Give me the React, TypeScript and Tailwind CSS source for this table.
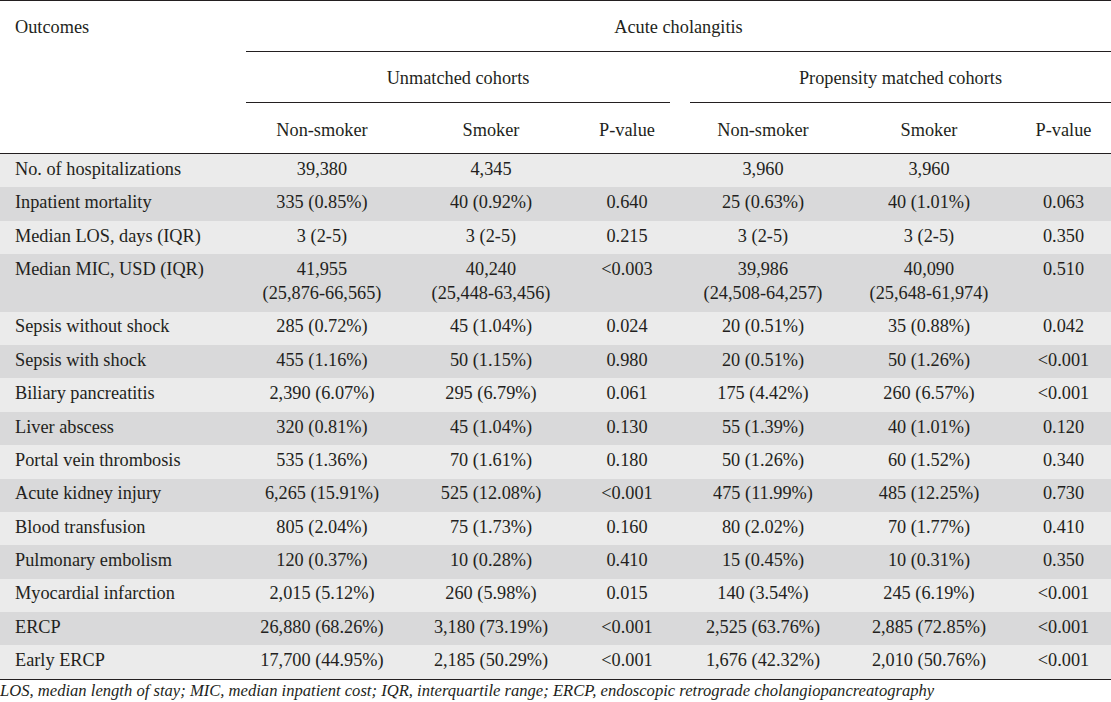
const COLS = 'grid grid-cols-[246px_152px_186px_86px_20px_146px_186px_89px]';

interface OutcomeRow {
  label: string;
  values: [string, string, string, string, string, string];
}

const rows: OutcomeRow[] = [
  { label: 'No. of hospitalizations', values: ['39,380', '4,345', '', '3,960', '3,960', ''] },
  { label: 'Inpatient mortality', values: ['335 (0.85%)', '40 (0.92%)', '0.640', '25 (0.63%)', '40 (1.01%)', '0.063'] },
  { label: 'Median LOS, days (IQR)', values: ['3 (2-5)', '3 (2-5)', '0.215', '3 (2-5)', '3 (2-5)', '0.350'] },
  {
    label: 'Median MIC, USD (IQR)',
    values: ['41,955\n(25,876-66,565)', '40,240\n(25,448-63,456)', '<0.003', '39,986\n(24,508-64,257)', '40,090\n(25,648-61,974)', '0.510'],
  },
  { label: 'Sepsis without shock', values: ['285 (0.72%)', '45 (1.04%)', '0.024', '20 (0.51%)', '35 (0.88%)', '0.042'] },
  { label: 'Sepsis with shock', values: ['455 (1.16%)', '50 (1.15%)', '0.980', '20 (0.51%)', '50 (1.26%)', '<0.001'] },
  { label: 'Biliary pancreatitis', values: ['2,390 (6.07%)', '295 (6.79%)', '0.061', '175 (4.42%)', '260 (6.57%)', '<0.001'] },
  { label: 'Liver abscess', values: ['320 (0.81%)', '45 (1.04%)', '0.130', '55 (1.39%)', '40 (1.01%)', '0.120'] },
  { label: 'Portal vein thrombosis', values: ['535 (1.36%)', '70 (1.61%)', '0.180', '50 (1.26%)', '60 (1.52%)', '0.340'] },
  { label: 'Acute kidney injury', values: ['6,265 (15.91%)', '525 (12.08%)', '<0.001', '475 (11.99%)', '485 (12.25%)', '0.730'] },
  { label: 'Blood transfusion', values: ['805 (2.04%)', '75 (1.73%)', '0.160', '80 (2.02%)', '70 (1.77%)', '0.410'] },
  { label: 'Pulmonary embolism', values: ['120 (0.37%)', '10 (0.28%)', '0.410', '15 (0.45%)', '10 (0.31%)', '0.350'] },
  { label: 'Myocardial infarction', values: ['2,015 (5.12%)', '260 (5.98%)', '0.015', '140 (3.54%)', '245 (6.19%)', '<0.001'] },
  { label: 'ERCP', values: ['26,880 (68.26%)', '3,180 (73.19%)', '<0.001', '2,525 (63.76%)', '2,885 (72.85%)', '<0.001'] },
  { label: 'Early ERCP', values: ['17,700 (44.95%)', '2,185 (50.29%)', '<0.001', '1,676 (42.32%)', '2,010 (50.76%)', '<0.001'] },
];

function ValueCell({ text, last }: { text: string; last?: boolean }) {
  return (
    <div className={`whitespace-pre-line text-center ${last ? 'pr-[6px]' : ''}`}>{text}</div>
  );
}

export default function App() {
  return (
    <div className="w-[1111px] bg-white font-['Liberation_Serif',serif] text-[18.3px] leading-[24px] text-[#231f20]">
      <div className={`${COLS} border-y border-[#231f20]`}>
        <div className="col-start-1 row-start-1 h-[51px] pl-[15px] pt-[14px]">Outcomes</div>
        <div className="col-span-7 col-start-2 row-start-1 h-[51px] border-b border-[#231f20] pt-[14px] text-center">
          Acute cholangitis
        </div>

        <div className="col-span-3 col-start-2 row-start-2 h-[51px] border-b border-[#231f20] pt-[14px] text-center">
          Unmatched cohorts
        </div>
        <div className="col-span-3 col-start-6 row-start-2 h-[51px] border-b border-[#231f20] pt-[14px] text-center">
          Propensity matched cohorts
        </div>

        <div className="col-start-2 row-start-3 h-[50px] pt-[15px] text-center">Non-smoker</div>
        <div className="col-start-3 row-start-3 pt-[15px] text-center">Smoker</div>
        <div className="col-start-4 row-start-3 pt-[15px] text-center">P-value</div>
        <div className="col-start-6 row-start-3 pt-[15px] text-center">Non-smoker</div>
        <div className="col-start-7 row-start-3 pt-[15px] text-center">Smoker</div>
        <div className="col-start-8 row-start-3 pt-[15px] pr-[6px] text-center">P-value</div>
      </div>

      <div className="border-b border-[#231f20]">
        {rows.map((row, i) => (
          <div
            key={row.label}
            className={`${COLS} pt-[2.8px] pb-[6.6px] ${i % 2 === 0 ? 'bg-[#ebebeb]' : 'bg-[#d9d9da]'}`}
          >
            <div className="pl-[15px]">{row.label}</div>
            <ValueCell text={row.values[0]} />
            <ValueCell text={row.values[1]} />
            <ValueCell text={row.values[2]} />
            <div />
            <ValueCell text={row.values[3]} />
            <ValueCell text={row.values[4]} />
            <ValueCell text={row.values[5]} last />
          </div>
        ))}
      </div>

      <p className="pt-[1px] text-[16.6px] leading-[20px] italic">
        LOS, median length of stay; MIC, median inpatient cost; IQR, interquartile range; ERCP, endoscopic retrograde cholangiopancreatography
      </p>
    </div>
  );
}
